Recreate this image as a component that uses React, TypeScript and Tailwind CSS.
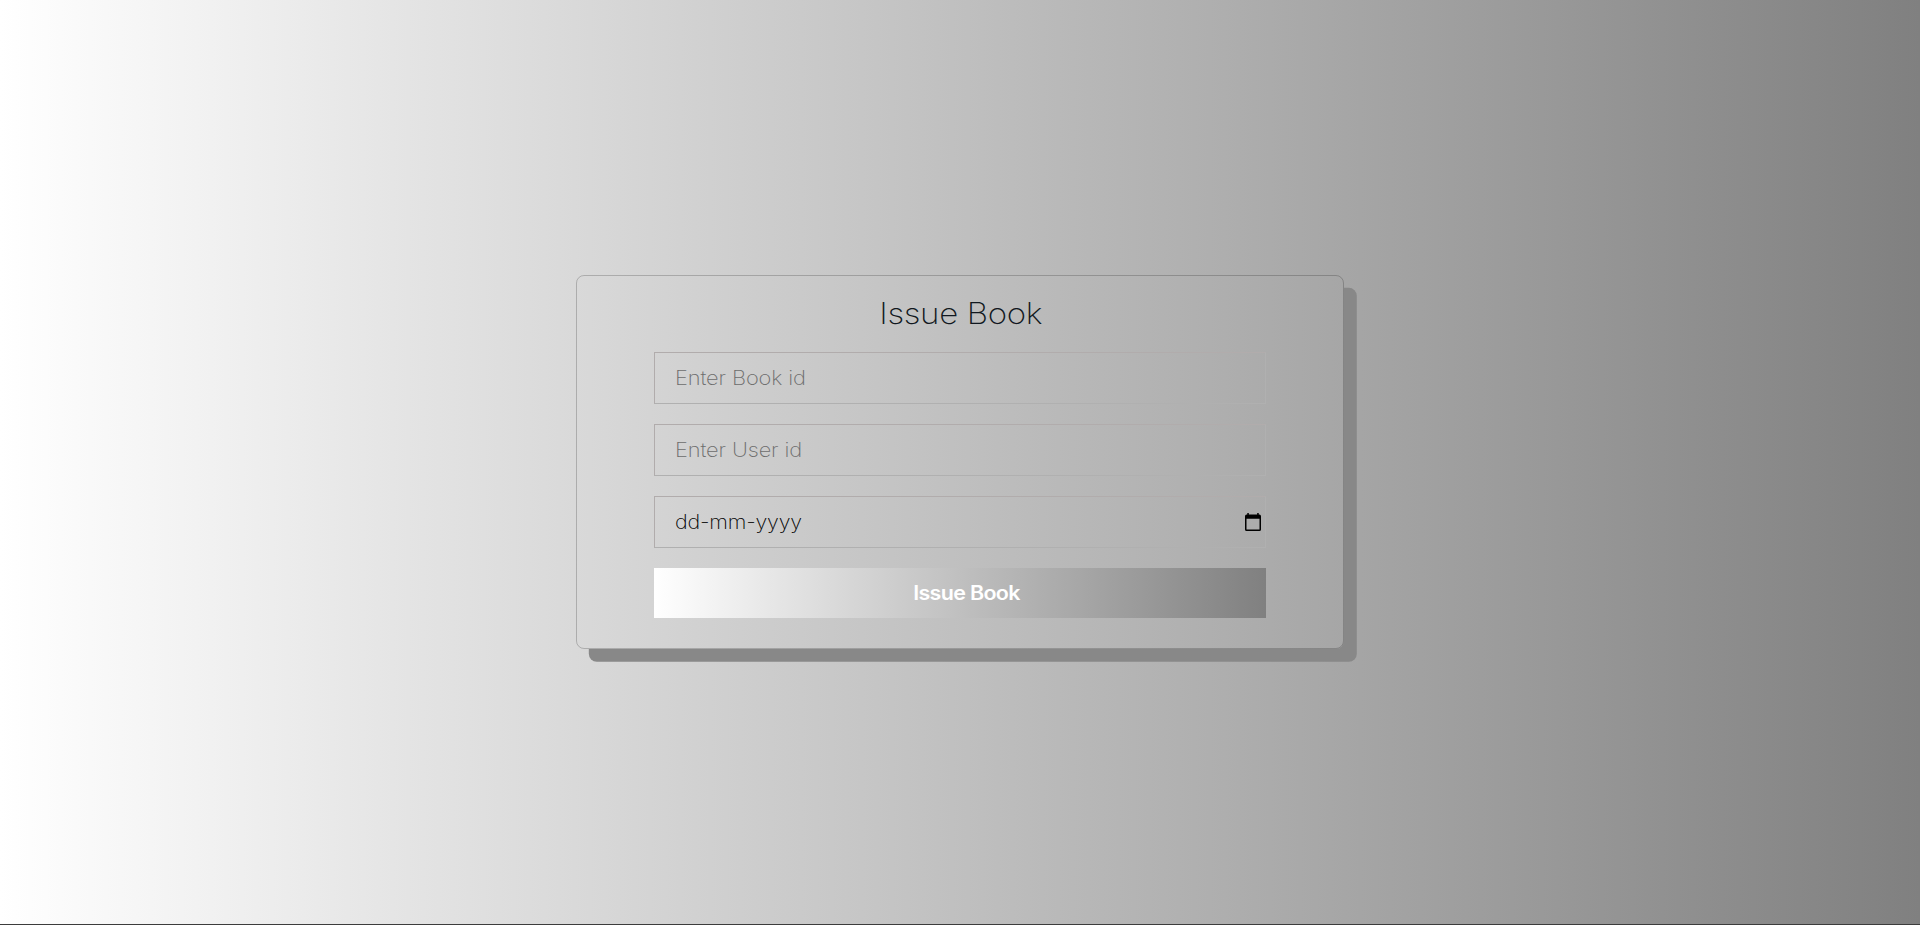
const fieldClass =
  "flex h-[52px] w-full items-center border border-[#b1acac] border-b-[#b0b0b0] border-r-[#b0b0b0] bg-transparent pl-5 pr-1";

function TextField({ label }: { label: string }) {
  return (
    <div className={fieldClass}>
      <input
        type="text"
        placeholder={label}
        className="w-[480px] origin-left translate-y-px scale-x-[1.12] bg-transparent text-[19.5px] font-extralight tracking-[-0.1px] outline-none placeholder:text-[#6c6c6c]"
      />
    </div>
  );
}

function CalendarIcon() {
  return (
    <svg width="16" height="18" viewBox="0 0 16 18" className="block">
      <path
        fill="#000"
        fillRule="evenodd"
        d="M2.3 0h1.5v1.6h8.4V0h1.5v1.6h.7A1.6 1.6 0 0 1 16 3.2v13.2a1.6 1.6 0 0 1-1.6 1.6H1.6A1.6 1.6 0 0 1 0 16.4V3.2a1.6 1.6 0 0 1 1.6-1.6h.7zM1.5 5.8v10.6h13V5.8z"
      />
    </svg>
  );
}

export default function App() {
  return (
    <main className="flex h-[925px] w-full flex-col items-center overflow-hidden border-b border-[#3c3c3c] bg-[linear-gradient(to_right,#fff,#808080)] pt-[275px] font-['Inter',sans-serif]">
      <form className="flex h-[374px] w-[768px] flex-col items-center rounded-[8px] border border-black/20 shadow-[12.8px_12.8px_0_#888]">
        <h1 className="mt-[19px] h-[38px] scale-x-[1.12] whitespace-nowrap pl-px text-[29.5px] font-extralight leading-[37px] tracking-[-0.3px] text-[#111820]">
          Issue Book
        </h1>
        <div className="mt-[19px] flex w-[612px] flex-col gap-5">
          <TextField label="Enter Book id" />
          <TextField label="Enter User id" />
          <div className={`${fieldClass} justify-between`}>
            <span className="origin-left translate-y-px scale-x-[1.1] text-[19.5px] font-extralight tracking-[-0.2px] text-black">
              dd-mm-yyyy
            </span>
            <CalendarIcon />
          </div>
          <button
            type="button"
            className="flex h-[50px] w-full items-center justify-center bg-[linear-gradient(to_right,#fff,#808080)] pl-3 text-white"
          >
            <span className="translate-y-px scale-x-[1.1] text-[19.5px] font-semibold tracking-[-0.6px]">Issue Book</span>
          </button>
        </div>
      </form>
    </main>
  );
}
